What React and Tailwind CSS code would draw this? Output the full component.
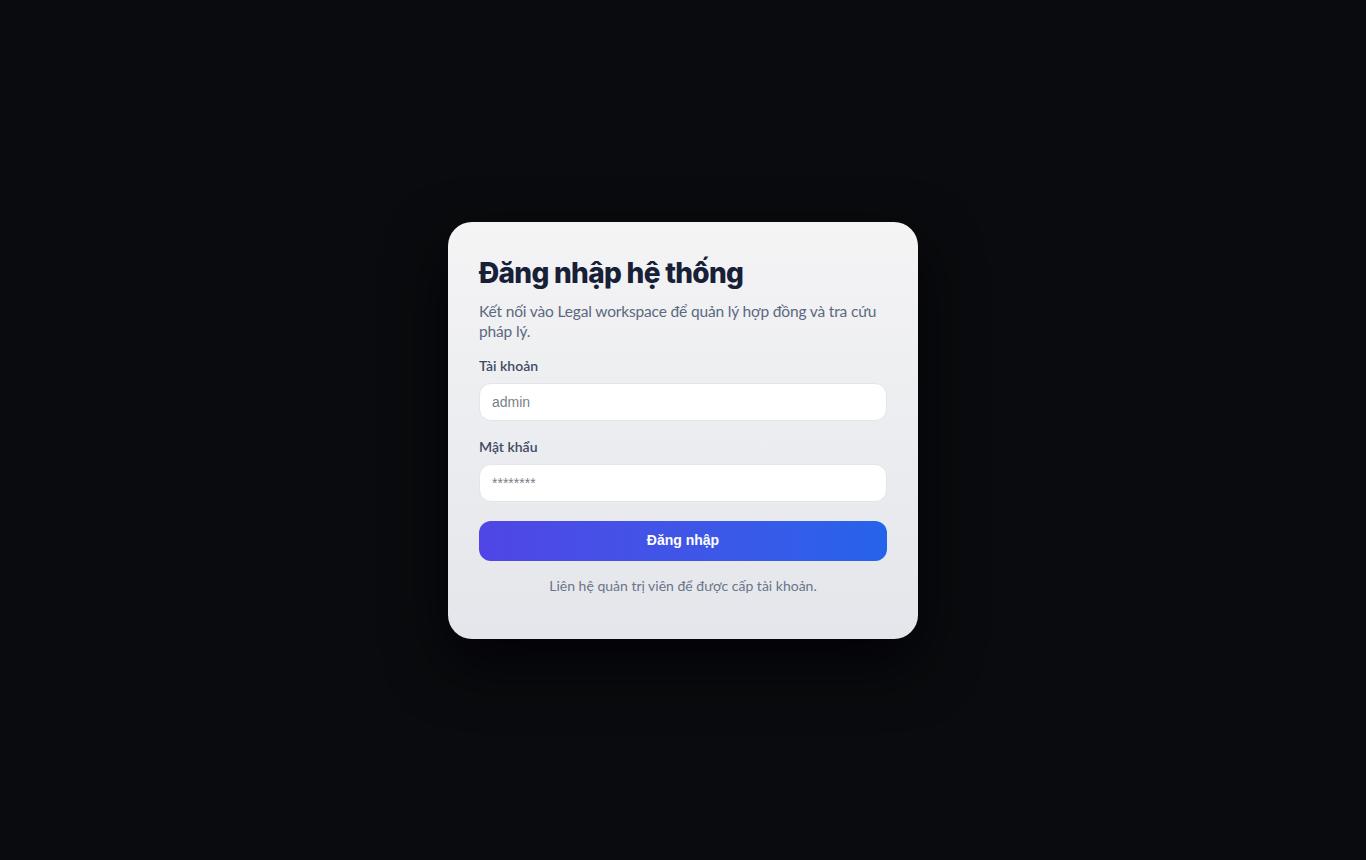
export default function App() {
    return (
        <div className="min-h-screen w-full bg-[#0a0b0e] flex items-center justify-center font-['Lato','Noto_Sans',sans-serif]">
            <div className="w-[470px] rounded-[24px] bg-gradient-to-b from-[#f4f4f5] to-[#e4e6eb] px-[31px] pt-[33px] pb-[43px] shadow-[0_24px_60px_rgba(0,0,6,0.8)]">
                <h1 className="text-[28px] leading-[36px] font-extrabold tracking-[-0.025em] text-[#172036] font-['Inter','Noto_Sans',sans-serif]">
                    Đăng nhập hệ thống
                </h1>
                <p className="mt-[10px] text-[15.5px] leading-[20px] tracking-[-0.01em] text-[#5b6880]">
                    Kết nối vào Legal workspace để quản lý hợp đồng và tra cứu pháp lý.
                </p>
                <form className="mt-[15px] flex flex-col" onSubmit={(e) => e.preventDefault()}>
                    <label className="text-[14px] leading-[20px] font-semibold text-[#3f4b63]">Tài khoản</label>
                    <input
                        className="mt-[7px] h-[38px] rounded-[12px] border border-[#e2e5ea] bg-white px-3 text-[14px] font-['Liberation_Sans',Arial,sans-serif] text-[#1f2937] placeholder:text-[#7a7f88] outline-none"
                        placeholder="admin"
                    />
                    <label className="mt-[16px] text-[14px] leading-[20px] font-semibold text-[#3f4b63]">Mật khẩu</label>
                    <input
                        type="password"
                        className="mt-[7px] h-[38px] rounded-[12px] border border-[#e2e5ea] bg-white px-3 text-[14px] font-['Liberation_Sans',Arial,sans-serif] text-[#1f2937] placeholder:text-[#7a7f88] outline-none"
                        placeholder="********"
                    />
                    <button
                        type="submit"
                        className="mt-[19px] h-[40px] rounded-[12px] bg-gradient-to-r from-[#4f46e5] to-[#2563eb] text-white text-[14px] font-bold font-['Liberation_Sans',Arial,sans-serif]"
                    >
                        Đăng nhập
                    </button>
                    <p className="mt-[15px] text-center text-[14px] leading-[20px] text-[#6b7488]">Liên hệ quản trị viên để được cấp tài khoản.</p>
                </form>
            </div>
        </div>
    );
}
